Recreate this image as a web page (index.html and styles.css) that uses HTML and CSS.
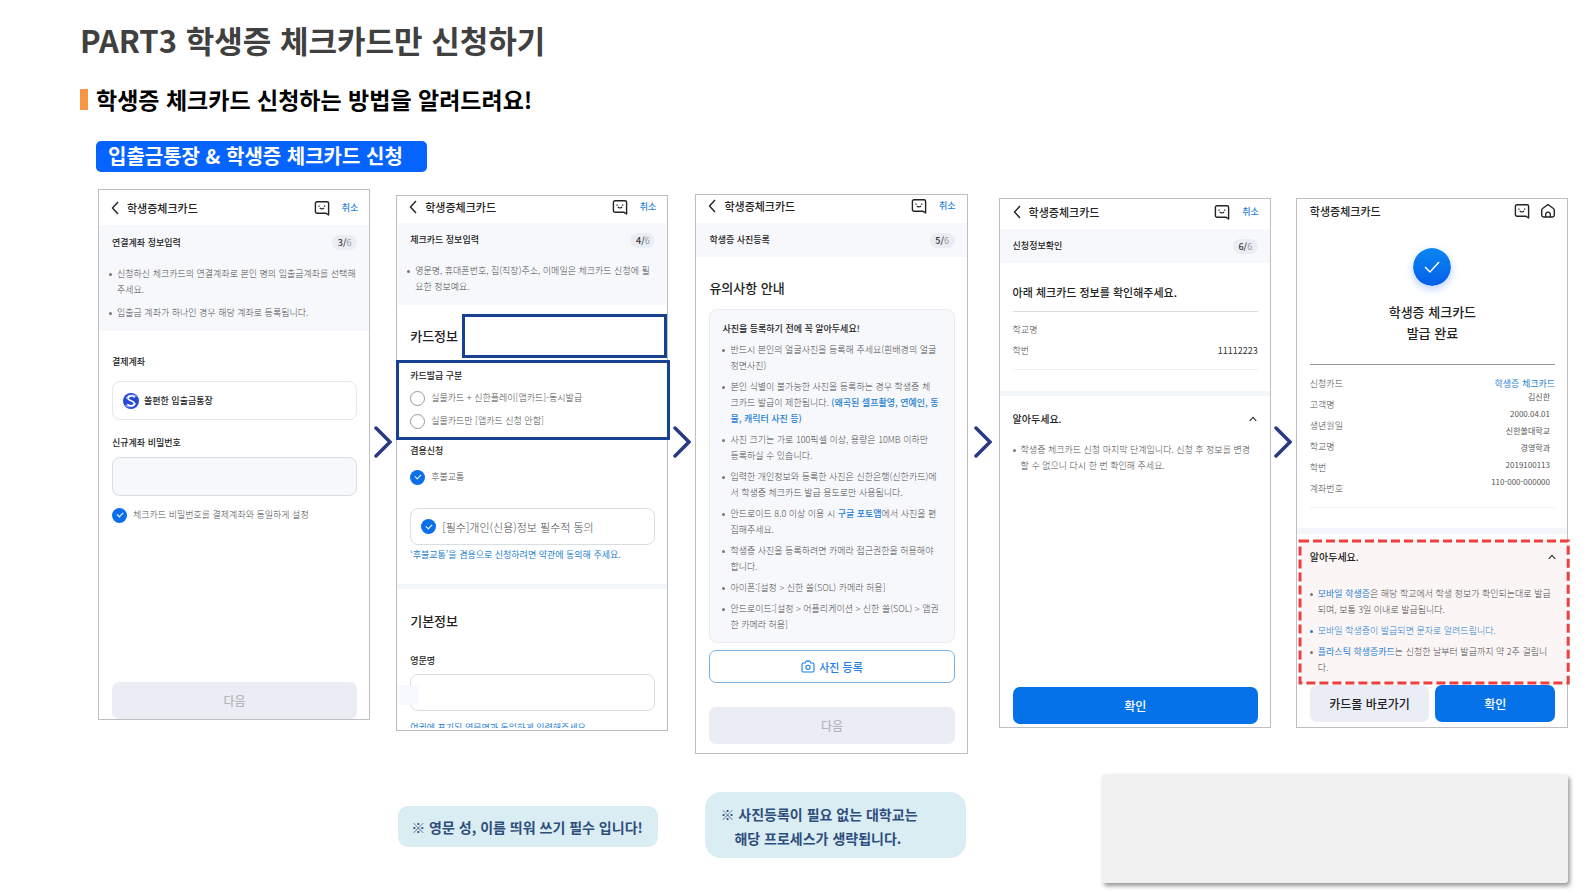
FILE: index.html
```html
<!DOCTYPE html>
<html lang="ko">
<head>
  <meta charset="UTF-8">
  <meta name="viewport" content="width=device-width, initial-scale=1.0">
  <title>PART3 학생증 체크카드만 신청하기</title>
  <link rel="stylesheet" href="styles.css">
</head>
<body>
  <!-- shared icons -->
  <svg class="sprite" aria-hidden="true">
    <symbol id="i-back" viewBox="0 0 8 14"><path d="M7 1 1.5 7 7 13" fill="none" stroke="#222" stroke-width="1.4"/></symbol>
    <symbol id="i-talk" viewBox="0 0 16 16"><path d="M3 1.7h10a1.6 1.6 0 0 1 1.6 1.6V15L11.8 13.200H3a1.6 1.6 0 0 1-1.6-1.6V3.3A1.6 1.6 0 0 1 3 1.7Z" fill="none" stroke="#222" stroke-width="1.4" stroke-linejoin="round"/><path d="M5 5.500v1.200M10.600 5.500v1.200M5.800 7.800c1 1.500 3.200 1.500 4.200 0" fill="none" stroke="#222" stroke-width="1.300"/></symbol>
    <symbol id="i-home" viewBox="0 0 16 16"><path d="M8 1.500 2.600 5.500a2 2 0 0 0-.9 1.700V12.300A1.800 1.800 0 0 0 3.500 14h9a1.800 1.800 0 0 0 1.800-1.700V7.200a2 2 0 0 0-.9-1.700Z" fill="none" stroke="#222" stroke-width="1.400" stroke-linejoin="round"/><path d="M5.700 14v-2.500a2.300 2.300 0 0 1 4.600 0V14" fill="none" stroke="#222" stroke-width="1.300"/></symbol>
    <symbol id="i-up" viewBox="0 0 8 6"><path d="m.8 4.800 3.200-3.400 3.200 3.400" fill="none" stroke="#333" stroke-width="1.200"/></symbol>
    <symbol id="i-next" viewBox="0 0 18 32"><path d="M2 2 16 16 2 30" fill="none" stroke="#283a85" stroke-width="3.500" stroke-linecap="round"/></symbol>
  </svg>

  <main class="slide">
    <h1>PART3 학생증 체크카드만 신청하기</h1>
    <h2>학생증 체크카드 신청하는 방법을 알려드려요!</h2>
    <p class="pill">입출금통장 &amp; 학생증 체크카드 신청</p>

    <div class="flow">
      <!-- 3/6 -->
      <section class="phone step-account">
        <header class="bar">
          <svg class="back"><use href="#i-back"/></svg>
          <span class="bar-title">학생증체크카드</span>
          <svg class="icon"><use href="#i-talk"/></svg>
          <a href="#" class="cancel">취소</a>
        </header>
        <div class="intro">
          <div class="intro-head"><h3>연결계좌 정보입력</h3><span class="badge"><b>3/</b>6</span></div>
          <ul class="dots">
            <li>신청하신 체크카드의 연결계좌로 본인 명의 입출금계좌를 선택해<br>주세요.</li>
            <li>입출금 계좌가 하나인 경우 해당 계좌로 등록됩니다.</li>
          </ul>
        </div>
        <div class="body">
          <h4 class="label-pay">결제계좌</h4>
          <div class="account">
            <svg class="logo" viewBox="0 0 16 16"><circle cx="8" cy="8" r="8" fill="#2347d8"/><path d="M11.800 4.300C9.600 2.400 5 2.700 5 5.300c0 2.700 6.300 2.200 6.300 5.100 0 2.700-4.600 3-7.200 1" fill="none" stroke="#fff" stroke-width="1.600"/><path d="M13.500 3.500C10.500 1 3 2 3.400 5.800M2.500 12.300c3 2.700 10.300 1.500 10-2.300" fill="none" stroke="#fff" stroke-width=".7"/></svg>
            <span>쏠편한 입출금통장</span>
          </div>
          <label class="label-pw" for="pw">신규계좌 비밀번호</label>
          <input class="field field-gray" id="pw" type="password">
          <label class="check check-pw"><input type="checkbox" checked>체크카드 비밀번호를 결제계좌와 동일하게 설정</label>
          <button class="btn btn-off" disabled>다음</button>
        </div>
      </section>

      <svg class="arrow"><use href="#i-next"/></svg>

      <!-- 4/6 -->
      <section class="phone step-info">
        <header class="bar">
          <svg class="back"><use href="#i-back"/></svg>
          <span class="bar-title">학생증체크카드</span>
          <svg class="icon"><use href="#i-talk"/></svg>
          <a href="#" class="cancel">취소</a>
        </header>
        <div class="intro">
          <div class="intro-head"><h3>체크카드 정보입력</h3><span class="badge"><b>4/</b>6</span></div>
          <ul class="dots">
            <li>영문명, 휴대폰번호, 집(직장)주소, 이메일은 체크카드 신청에 필<br>요한 정보예요.</li>
          </ul>
        </div>
        <div class="body">
          <div class="card-info">
            <h3 class="big">카드정보</h3>
            <div class="mark"></div>
          </div>
          <fieldset class="issue">
            <legend>카드발급 구분</legend>
            <label class="check"><input type="radio" name="issue">실물카드 + 신한플레이[앱카드]-동시발급</label>
            <label class="check"><input type="radio" name="issue">실물카드만 [앱카드 신청 안함]</label>
          </fieldset>
          <h4 class="label-extra">겸용신청</h4>
          <label class="check check-bus"><input type="checkbox" checked>후불교통</label>
          <label class="check agree"><input type="checkbox" checked>[필수]개인(신용)정보 필수적 동의</label>
          <p class="hint">‘후불교통’을 겸용으로 신청하려면 약관에 동의해 주세요.</p>
          <div class="band"></div>
          <h3 class="big basic">기본정보</h3>
          <label class="label-name" for="eng">영문명</label>
          <div class="name-box"><input class="field" id="eng" type="text"></div>
          <p class="hint hint-cut">여권에 표기된 영문명과 동일하게 입력해주세요</p>
        </div>
      </section>

      <svg class="arrow"><use href="#i-next"/></svg>

      <!-- 5/6 -->
      <section class="phone step-photo">
        <header class="bar">
          <svg class="back"><use href="#i-back"/></svg>
          <span class="bar-title">학생증체크카드</span>
          <svg class="icon"><use href="#i-talk"/></svg>
          <a href="#" class="cancel">취소</a>
        </header>
        <div class="intro">
          <div class="intro-head"><h3>학생증 사진등록</h3><span class="badge"><b>5/</b>6</span></div>
        </div>
        <div class="body">
          <h3 class="big guide">유의사항 안내</h3>
          <div class="guide-box">
            <h4>사진을 등록하기 전에 꼭 알아두세요!</h4>
            <ul class="dots">
              <li>반드시 본인의 얼굴사진을 등록해 주세요(흰배경의 얼굴<br>정면사진)</li>
              <li>본인 식별이 불가능한 사진을 등록하는 경우 학생증 체<br>크카드 발급이 제한됩니다. <em>(왜곡된 셀프촬영, 연예인, 동<br>물, 캐릭터 사진 등)</em></li>
              <li>사진 크기는 가로 100픽셀 이상, 용량은 10MB 이하만<br>등록하실 수 있습니다.</li>
              <li>입력한 개인정보와 등록한 사진은 신한은행(신한카드)에<br>서 학생증 체크카드 발급 용도로만 사용됩니다.</li>
              <li>안드로이드 8.0 이상 이용 시 <em>구글 포토앱</em>에서 사진을 편<br>집해주세요.</li>
              <li>학생증 사진을 등록하려면 카메라 접근권한을 허용해야<br>합니다.</li>
              <li>아이폰:[설정 &gt; 신한 쏠(SOL) 카메라 허용]</li>
              <li>안드로이드:[설정 &gt; 어플리케이션 &gt; 신한 쏠(SOL) &gt; 앱권<br>한 카메라 허용]</li>
            </ul>
          </div>
          <button class="btn btn-photo">
            <svg class="camera" viewBox="0 0 14 13"><path d="M2.200 3h2l1-1.900h3.600l1 1.900h2A1.200 1.200 0 0 1 13 4.200v6.600a1.200 1.200 0 0 1-1.200 1.200H2.200A1.200 1.200 0 0 1 1 10.800V4.200A1.200 1.200 0 0 1 2.200 3Z" fill="none" stroke="#1f7fe0" stroke-width="1.100"/><circle cx="7" cy="7.300" r="2.100" fill="none" stroke="#1f7fe0" stroke-width="1.100"/></svg>
            사진 등록
          </button>
          <button class="btn btn-off" disabled>다음</button>
        </div>
      </section>

      <svg class="arrow"><use href="#i-next"/></svg>

      <!-- 6/6 -->
      <section class="phone step-confirm">
        <header class="bar">
          <svg class="back"><use href="#i-back"/></svg>
          <span class="bar-title">학생증체크카드</span>
          <svg class="icon"><use href="#i-talk"/></svg>
          <a href="#" class="cancel">취소</a>
        </header>
        <div class="intro">
          <div class="intro-head"><h3>신청정보확인</h3><span class="badge"><b>6/</b>6</span></div>
        </div>
        <div class="body">
          <h3 class="mid">아래 체크카드 정보를 확인해주세요.</h3>
          <table class="info">
            <tr><th>학교명</th><td></td></tr>
            <tr><th>학번</th><td>11112223</td></tr>
          </table>
          <div class="band"></div>
          <div class="notice-head"><h3>알아두세요.</h3><svg class="up"><use href="#i-up"/></svg></div>
          <ul class="dots">
            <li>학생증 체크카드 신청 마지막 단계입니다. 신청 후 정보를 변경<br>할 수 없으니 다시 한 번 확인해 주세요.</li>
          </ul>
          <button class="btn btn-blue">확인</button>
        </div>
      </section>

      <svg class="arrow"><use href="#i-next"/></svg>

      <!-- 발급 완료 -->
      <section class="phone step-done">
        <header class="bar">
          <span class="bar-title">학생증체크카드</span>
          <svg class="icon"><use href="#i-talk"/></svg>
          <svg class="icon"><use href="#i-home"/></svg>
        </header>
        <div class="body">
          <svg class="done-mark" viewBox="0 0 38 38">
            <defs><linearGradient id="blue" x1="0" y1="0" x2="0" y2="1"><stop offset="0" stop-color="#0a86f2"/><stop offset="1" stop-color="#055fe8"/></linearGradient></defs>
            <circle cx="19" cy="19" r="19" fill="url(#blue)"/>
            <path d="m12 19 5 5 9-10" fill="none" stroke="#fff" stroke-width="1.500"/>
          </svg>
          <h3 class="done-title">학생증 체크카드<br>발급 완료</h3>
          <div class="result">
            <ul class="names">
              <li>신청카드</li>
              <li>고객명</li>
              <li>생년월일</li>
              <li>학교명</li>
              <li>학번</li>
              <li>계좌번호</li>
            </ul>
            <ul class="values">
              <li class="card-name">학생증 체크카드</li>
              <li>김신한</li>
              <li>2000.04.01</li>
              <li>신한쏠대학교</li>
              <li>경영학과</li>
              <li>2019100113</li>
              <li>110-000-000000</li>
            </ul>
          </div>
          <div class="band"></div>
          <div class="notice">
            <svg class="dash"><rect x="0" y="0" width="100%" height="100%"/></svg>
            <div class="notice-head"><h3>알아두세요.</h3><svg class="up"><use href="#i-up"/></svg></div>
            <ul class="dots">
              <li><em>모바일 학생증</em>은 해당 학교에서 학생 정보가 확인되는대로 발급<br>되며, 보통 3일 이내로 발급됩니다.</li>
              <li class="blue">모바일 학생증이 발급되면 문자로 알려드립니다.</li>
              <li><em>플라스틱 학생증카드</em>는 신청한 날부터 발급까지 약 2주 걸립니<br>다.</li>
            </ul>
          </div>
          <div class="btns">
            <button class="btn btn-light">카드몰 바로가기</button>
            <button class="btn btn-blue">확인</button>
          </div>
        </div>
      </section>

      <p class="note note-name">※ 영문 성, 이름 띄워 쓰기 필수 입니다!</p>
      <p class="note note-photo">※ 사진등록이 필요 없는 대학교는<br><span>해당 프로세스가 생략됩니다.</span></p>
      <div class="blank"></div>
    </div>
  </main>
</body>
</html>
```

FILE: styles.css
```css
* {
  box-sizing: border-box;
  margin: 0;
  padding: 0;
}
body, input, button {
  font-family: "Noto Sans CJK KR", sans-serif;
}
body {
  background: #fff;
  color: #222;
}
ul {
  list-style: none;
}
a {
  text-decoration: none;
}
em {
  font-style: normal;
  font-weight: 500;
  color: #1f7fd0;
}
.sprite {
  position: absolute;
  width: 0;
  height: 0;
}

/* === slide heading === */
.slide {
  padding: 20px 20px 9px 98px;
}
h1 {
  margin-left: -18px;
  font-size: 31px;
  line-height: 40px;
  color: #404040;
}
h2 {
  display: flex;
  align-items: center;
  gap: 8px;
  margin: 26px 0 0 -18px;
  font-size: 23px;
  line-height: 26px;
  color: #000;
}
h2::before {
  content: "";
  width: 8px;
  height: 21px;
  background: #f79646;
}
.pill {
  width: fit-content;
  margin: 29px 0 17px -2px;
  padding: 0 24px 2px 12px;
  border-radius: 5px;
  background: #0563ff;
  color: #fff;
  font-size: 20px;
  font-weight: bold;
  line-height: 29px;
}

/* === screens side by side === */
.flow {
  display: grid;
  grid-template-columns:
    minmax(0, 1fr) 26px minmax(0, 1fr) 27px minmax(0, 1fr)
    31px minmax(0, 1fr) 25px minmax(0, 1fr);
  align-items: start;
}
.arrow {
  width: 18px;
  height: 32px;
  margin-top: 237px;
  justify-self: center;
}
.phone {
  border: 1px solid #bfbfbf;
  font-size: 9px;
  line-height: 16px;
}
.step-info {
  margin-top: 6px;
}
.step-photo {
  margin-top: 5px;
}
.step-confirm,
.step-done {
  margin-top: 9px;
}
.body {
  padding: 0 12px 0 13px;
}

/* === top bar === */
.bar {
  display: flex;
  align-items: center;
  height: 28px;
  padding: 0 11px 6px 12px;
}
.step-account .bar {
  height: 35px;
  padding-bottom: 0;
}
.step-info .bar {
  height: 27px;
}
.step-confirm .bar {
  height: 30px;
  padding: 0 11px 4px 13px;
}
.step-done .bar {
  padding: 0 11px 4px 13px;
}
.back {
  width: 8px;
  height: 14px;
  margin-right: 8px;
}
.bar-title {
  flex: 1;
  font-size: 11px;
  font-weight: 500;
}
.icon {
  width: 16px;
  height: 16px;
}
.icon + .icon {
  margin-left: 10px;
}
.cancel {
  margin-left: 12px;
  color: #1f7fe0;
  font-weight: 500;
}

/* === gray intro === */
.intro {
  background: #f7f8fc;
}
.intro-head {
  display: flex;
  align-items: center;
  justify-content: space-between;
  height: 34px;
  padding: 0 12px 0 13px;
}
.step-account .intro-head {
  height: 35px;
}
.intro-head h3,
h4, .label-pw, .label-name, .issue legend {
  font-size: 9px;
  font-weight: 500;
}
.badge {
  width: 25px;
  border-radius: 8px;
  background: #ebedf4;
  color: #999;
  text-align: center;
  line-height: 15px;
}
.badge b {
  color: #333;
  font-weight: 500;
}
.intro .dots {
  padding: 6px 8px 10px 10px;
}

/* === bullets === */
.dots {
  display: flex;
  flex-direction: column;
  gap: 5px;
  color: #4c4c4c;
  font-weight: 300;
  white-space: nowrap;
}
.dots li {
  position: relative;
  padding-left: 8px;
}
.dots li::before {
  content: "";
  position: absolute;
  left: 0;
  top: 7px;
  width: 3px;
  height: 3px;
  border-radius: 50%;
  background: #777;
}
.step-account .dots {
  gap: 7px;
}

/* === form parts === */
h4, .label-pw, .label-name {
  display: block;
}
.label-pay {
  margin-top: 23px;
}
.account {
  display: flex;
  align-items: center;
  gap: 5px;
  height: 39px;
  margin-top: 11px;
  padding-left: 10px;
  border: 1px solid #e6e7ea;
  border-radius: 8px;
  font-weight: 500;
}
.logo {
  width: 16px;
  height: 16px;
}
.label-pw {
  margin-top: 15px;
}
.field {
  display: block;
  width: 100%;
  height: 37px;
  padding: 0 10px;
  border: 1px solid #dcdde1;
  border-radius: 8px;
  background: #fff;
}
.field-gray {
  height: 39px;
  margin-top: 6px;
  background: #f7f8fc;
}
.check {
  display: flex;
  align-items: center;
  gap: 6px;
  color: #4c4c4c;
  font-weight: 300;
}
.check input {
  appearance: none;
  width: 15px;
  height: 15px;
  border: 1px solid #999;
  border-radius: 50%;
}
.check input:checked {
  display: grid;
  place-items: center;
  border: none;
  background: #0a6fe8;
}
.check input:checked::after {
  content: "";
  width: 5px;
  height: 3px;
  margin-bottom: 2px;
  border: solid #fff;
  border-width: 0 0 1px 1px;
  transform: rotate(-45deg);
}
.check-pw {
  margin-top: 11px;
}
.btn {
  display: block;
  width: 100%;
  height: 37px;
  border: none;
  border-radius: 7px;
  font-size: 12px;
  font-weight: 500;
}
.btn-off {
  background: #ebedf4;
  color: #b4b6bc;
}
.btn-blue {
  background: #0672ea;
  color: #fff;
}
.btn-light {
  background: #ebedf4;
  color: #222;
}
.step-account .btn {
  margin-top: 159px;
}
.band {
  height: 5px;
  margin: 21px -12px 0 -13px;
  background: #f2f6fb;
}
.big {
  font-size: 13px;
  font-weight: 500;
  line-height: 20px;
}

/* === card info === */
.card-info {
  display: flex;
  align-items: center;
  gap: 4px;
  margin: 9px -12px 2px 0;
}
.mark {
  flex: 1;
  height: 44px;
  border: 3px solid #174291;
}
.issue {
  display: flex;
  flex-direction: column;
  gap: 7px;
  margin: 0 -15px 0 -14px;
  padding: 5px 12px 8px 11px;
  border: 3px solid #174291;
}
.issue legend {
  float: left;
  margin-bottom: -1px;
}
.label-extra {
  margin-top: 3px;
}
.check-bus {
  margin-top: 10px;
}
.agree {
  height: 37px;
  margin: 23px 0 2px;
  padding-left: 10px;
  border: 1px solid #dcdde1;
  border-radius: 8px;
  font-size: 11px;
}
.hint {
  color: #1f7fd0;
}
.basic {
  margin-top: 22px;
}
.label-name {
  margin: 22px 0 5px;
}
.name-box {
  position: relative;
}
.name-box::after {
  content: "";
  position: absolute;
  left: -13px;
  top: 11px;
  width: 22px;
  height: 20px;
  background: #f8f8ff;
}
/* last line runs under the edge of the screen */
.hint-cut {
  height: 8px;
  margin: 9px 0 2px;
  overflow: hidden;
}

/* === photo guide === */
.guide {
  margin: 21px 0 11px;
}
.guide-box {
  padding: 11px 8px 9px 12px;
  border: 1px solid #e8eaf0;
  border-radius: 8px;
  background: #f7f8fc;
}
.guide-box .dots {
  margin-top: 5px;
}
.btn-photo {
  display: flex;
  align-items: center;
  justify-content: center;
  gap: 4px;
  height: 33px;
  margin: 7px 0 24px;
  border: 1px solid #7db2e0;
  background: #fff;
  color: #1f7fe0;
  font-size: 11px;
}
.camera {
  width: 14px;
  height: 13px;
}
.step-photo .btn-off {
  margin-bottom: 9px;
}

/* === confirm === */
.mid {
  margin: 19px 0 9px;
  font-size: 11px;
  font-weight: 500;
  line-height: 20px;
}
.info {
  width: 100%;
  border-collapse: separate;
  border-spacing: 0;
  padding: 7px 0 8px;
  border-top: 1px solid #ddd;
  border-bottom: 1px solid #f0f0f0;
}
.info th, .info td {
  height: 21px;
  font-weight: 300;
  text-align: left;
  color: #4c4c4c;
}
.info td {
  text-align: right;
  color: #333;
  font-weight: 400;
}
.notice-head {
  display: flex;
  align-items: center;
  justify-content: space-between;
  margin: 13px 0;
  padding-right: 1px;
}
.notice-head h3 {
  font-size: 10px;
  font-weight: 500;
  line-height: 20px;
}
.up {
  width: 8px;
  height: 6px;
}
.step-confirm .btn {
  margin: 213px 0 3px;
}

/* === done === */
.done-mark {
  display: block;
  width: 38px;
  height: 38px;
  margin: 21px auto 15px;
  border-radius: 50%;
  box-shadow: 0 3px 8px #b9d0ff;
}
.done-title {
  font-size: 13px;
  font-weight: 500;
  line-height: 21px;
  text-align: center;
}
.result {
  display: flex;
  justify-content: space-between;
  margin-top: 21px;
  padding: 8px 0;
  border-top: 1px solid #999;
  border-bottom: 1px solid #f0f0f0;
}
.names {
  color: #4c4c4c;
  font-weight: 300;
  line-height: 21px;
}
.values {
  padding-right: 5px;
  color: #555;
  font-size: 8px;
  line-height: 17px;
  text-align: right;
}
.values .card-name {
  margin: 2px -5px -4px 0;
  color: #1f7fd0;
  font-size: 9px;
}
.step-done .band {
  height: 6px;
  margin-top: 20px;
}
.notice {
  position: relative;
  margin: 7px -13px 2px -10px;
  padding: 6px 11px 7px 10px;
  background: #fbf5f5;
}
.dash {
  position: absolute;
  left: 0;
  top: 0;
  width: 100%;
  height: 100%;
  overflow: visible;
}
.dash rect {
  fill: none;
  stroke: #ee3f40;
  stroke-width: 3;
  stroke-dasharray: 9 4;
}
.notice .notice-head {
  margin: 0 0 19px;
}
.notice em {
  font-weight: 400;
}
.blue {
  color: #1f7fd0;
}
.notice .blue::before {
  background: #1f7fd0;
}
.btns {
  display: flex;
  gap: 6px;
  padding-bottom: 5px;
}

/* === notes under the screens === */
.note {
  color: #2f4d7d;
  background: #daedf3;
  font-size: 14px;
  font-weight: bold;
  line-height: 24px;
}
.note-name {
  grid-column: 3;
  margin: 52px 10px 0 2px;
  padding: 9px 13px 8px;
  border-radius: 10px;
}
.note-photo {
  grid-column: 5;
  margin: 38px 2px 0 10px;
  padding: 10px 15px 8px;
  border-radius: 16px;
}
.note-photo span {
  padding-left: 14px;
}
.blank {
  grid-column: 7 / -1;
  height: 109px;
  margin: 20px 0 0 103px;
  border-radius: 3px;
  background: #f1f1f1;
  box-shadow: 2px 3px 4px #999;
}
```
